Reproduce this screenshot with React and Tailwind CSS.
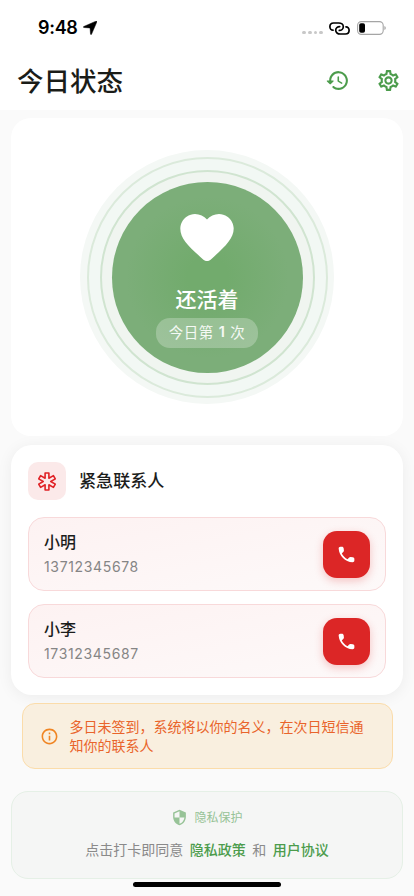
import { MdOutlineSettings, MdInfoOutline, MdSecurity } from "react-icons/md";

const contacts = [
  { name: "小明", phone: "13712345678" },
  { name: "小李", phone: "17312345687" },
];

function HistoryIcon() {
  return (
    <svg width="25" height="25" viewBox="0 0 24 24" fill="currentColor">
      <path d="M13.26 3C8.17 2.86 4 6.95 4 12H2.21c-.45 0-.67.54-.35.85l2.79 2.8c.2.2.51.2.71 0l2.79-2.8c.31-.31.09-.85-.36-.85H6c0-3.9 3.18-7.05 7.1-7 3.72.05 6.85 3.18 6.9 6.9.05 3.91-3.1 7.1-7 7.1-1.61 0-3.1-.55-4.28-1.48-.4-.31-.96-.28-1.32.08-.42.42-.39 1.13.08 1.49C9 20.29 10.91 21 13 21c5.05 0 9.14-4.17 9-9.26-.13-4.69-4.05-8.61-8.74-8.74zm-.51 5c-.41 0-.75.34-.75.75v3.68c0 .35.19.68.49.86l3.12 1.85c.36.21.82.09 1.03-.26.21-.36.09-.82-.26-1.03l-2.88-1.71v-3.4c0-.4-.34-.74-.75-.74z" />
    </svg>
  );
}

function HeartIcon() {
  return (
    <svg className="shrink-0" width="64" height="64" viewBox="0 0 24 24" fill="currentColor">
      <path d="M13.35 20.13c-.76.69-1.93.69-2.69-.01l-.11-.1C5.3 15.27 1.87 12.16 2 8.28c.06-1.7.93-3.33 2.34-4.29 2.64-1.8 5.9-.96 7.66 1.1 1.76-2.06 5.02-2.91 7.66-1.1 1.41.96 2.28 2.59 2.34 4.29.14 3.88-3.3 6.99-8.55 11.76l-.1.09z" />
    </svg>
  );
}

function CallIcon() {
  return (
    <svg width="21" height="21" viewBox="0 0 24 24" fill="currentColor">
      <path d="M19.23 15.26l-2.54-.29c-.61-.07-1.21.14-1.64.57l-1.84 1.84c-2.83-1.44-5.15-3.75-6.59-6.59l1.85-1.85c.43-.43.64-1.03.57-1.64l-.29-2.52c-.12-1.01-.97-1.77-1.99-1.77H5.03c-1.13 0-2.07.94-2 2.07.53 8.54 7.36 15.36 15.89 15.89 1.13.07 2.07-.87 2.07-2v-1.73c.01-1.01-.75-1.86-1.76-1.98z" />
    </svg>
  );
}

function StatusBar() {
  return (
    <div className="flex h-[54px] items-center pl-[38px] pr-[28px] pt-[2px]">
      <span className="font-['Inter'] text-[18px] font-semibold leading-none tracking-[-0.3px] text-black">9:48</span>
      <svg className="ml-[5px]" width="14" height="14" viewBox="0 0 14 14">
        <path d="M12.9.2Q14.200-.2 13.8 1L8.600 13.1Q8 14.300 7.500 13L7.100 7.400Q7.100 6.900 6.600 6.900L.9 6.500Q-.4 6.200.8 5.500Z" stroke="#000" strokeWidth=".5" />
      </svg>
      <div className="ml-auto mt-[9px] flex gap-[1.8px]">
        {[0, 1, 2, 3].map((i) => (
          <i key={i} className="size-[3.8px] rounded-full bg-[#c8c8c8]" />
        ))}
      </div>
      <svg className="ml-[6px]" width="21" height="13" viewBox="0 0 21 13" fill="none" stroke="#000" strokeWidth="1.7" strokeLinecap="round">
        <path d="M4 8.2C2.200 8.200.9 6.500.9 4.700C.9 2.600 2.500 1 4.600 1H9.800C12.300 1 14.300 2.500 14.300 4.700C14.300 6.800 12.500 8.400 10.300 8.400" />
        <path d="M17 4.800C18.800 4.800 20.100 6.500 20.100 8.300C20.100 10.400 18.500 12 16.400 12H11.200C8.700 12 6.700 10.500 6.700 8.300C6.700 6.200 8.500 4.600 10.700 4.600" />
      </svg>
      <svg className="ml-[7px]" width="29" height="14" viewBox="0 0 29 14" fill="none">
        <rect x=".6" y=".6" width="25.6" height="12.8" rx="3.8" stroke="#a5a5a5" strokeWidth="1.1" />
        <rect x="2.2" y="2.2" width="5.8" height="9.6" rx="1.8" fill="#000" />
        <path d="M27.4 5v4Q28.8 8.5 28.8 7T27.4 5" fill="#a5a5a5" />
      </svg>
    </div>
  );
}

function Header() {
  return (
    <header className="flex h-[52px] items-center pl-[17px] pr-[13px]">
      <h1 className="text-[26.5px] font-medium leading-none text-[#1a1c18]">今日状态</h1>
      <div className="ml-auto flex gap-[26px] text-[#4c9c4c]">
        <HistoryIcon />
        <MdOutlineSettings size={25} />
      </div>
    </header>
  );
}

function CheckIn() {
  return (
    <section className="mx-[11px] mt-2 flex h-[318px] items-center justify-center rounded-[20px] bg-white">
      <div className="flex size-[254px] items-center justify-center rounded-full bg-[#f4f8f5]">
        <div className="flex size-[241px] items-center justify-center rounded-full border-2 border-[#dbeadb] bg-[#f2f8f4]">
          <div className="flex size-[215px] items-center justify-center rounded-full border-2 border-[#d0e4d0] bg-[#f0f5f0]">
            <button className="flex size-[191px] flex-col items-center rounded-full bg-[radial-gradient(circle,#72ab6d_15%,#7cae79_60%)] pt-[24px] text-white">
              <HeartIcon />
              <span className="mt-[16px] text-[21px] font-medium leading-6">还活着</span>
              <span className="mt-[8px] flex h-[30px] w-[102px] shrink-0 items-center justify-center rounded-[14px] bg-white/25 pb-[1px] text-[14.5px] tracking-[0.5px] text-white/90">
                今日第<b className="mx-[5px] font-['Inter'] font-semibold">1</b>次
              </span>
            </button>
          </div>
        </div>
      </div>
    </section>
  );
}

function Contact({ name, phone }) {
  return (
    <div className="flex h-[74px] items-center rounded-[16px] border border-[#f8d9da] bg-linear-to-br from-[#fdf2f2] to-[#fdf9f9] pl-[15px] pr-[15px]">
      <div>
        <div className="text-[16px] font-medium leading-6 text-[#1b1d1b]">{name}</div>
        <div className="mt-[2px] font-['Inter'] text-[14px] leading-6 tracking-[0.65px] text-[#858585]">{phone}</div>
      </div>
      <button className="ml-auto flex size-[47px] items-center justify-center rounded-[14px] bg-[#dc2626] text-white shadow-[0_3px_8px_rgba(220,38,38,0.25)]">
        <CallIcon />
      </button>
    </div>
  );
}

function Contacts() {
  return (
    <section className="mx-[11px] mt-[9px] h-[250px] rounded-[21px] bg-white px-[17px] pt-[17px] shadow-[0_2px_16px_rgba(0,0,0,0.06)]">
      <div className="flex items-center">
        <div className="flex size-[38px] items-center justify-center rounded-[10px] bg-[#fbe9e9]">
          <svg width="18" height="19" viewBox="0 0 18 19" fill="none" stroke="#e02226" strokeWidth="1.6" strokeLinejoin="round">
            <path d="M7.1 1h3.8v5.2l4.5-2.6 1.9 3.3-4.5 2.6 4.5 2.6-1.9 3.3-4.5-2.6V18H7.1v-5.2l-4.5 2.6-1.9-3.3 4.5-2.6L.7 6.9l1.9-3.3 4.5 2.6Z" />
          </svg>
        </div>
        <h2 className="ml-[13px] pb-[2px] text-[17.1px] font-medium leading-none text-[#1b1d1b]">紧急联系人</h2>
      </div>
      <div className="mt-[17px] flex flex-col gap-[13px]">
        {contacts.map((c) => (
          <Contact key={c.phone} {...c} />
        ))}
      </div>
    </section>
  );
}

function Notice() {
  return (
    <section className="ml-[21.5px] mr-[21.5px] mt-2 flex h-[66px] items-center rounded-[13px] border border-[#fbdcaa] bg-[#f9efdf] pl-[17.500px]">
      <MdInfoOutline size={19} className="shrink-0 text-[#f08523]" />
      <p className="ml-[10.5px] text-[14px] leading-[19px] text-[#e9642b]">
        多日未签到，系统将以你的名义，在次日短信通
        <br />
        知你的联系人
      </p>
    </section>
  );
}

function Privacy() {
  return (
    <footer className="mx-[11px] mt-[21.500px] flex h-[88px] flex-col items-center rounded-[17px] border border-[#e5f0e6] bg-[#f5f6f5] pt-[15.500px]">
      <div className="flex items-center gap-[6px] text-[12px] leading-5 text-[#97c397]">
        <MdSecurity size={17} />
        <span>隐私保护</span>
      </div>
      <p className="mt-[12px] flex gap-[6.5px] text-[14px] leading-5 text-[#8a8a8a]">
        <span>点击打卡即同意</span>
        <a className="font-medium text-[#4c9c4c]">隐私政策</a>
        <span>和</span>
        <a className="font-medium text-[#4c9c4c]">用户协议</a>
      </p>
    </footer>
  );
}

export default function App() {
  return (
    <main className="relative h-[896px] w-[414px] overflow-hidden bg-[#fafafa] font-['Noto_Sans_CJK_SC',sans-serif]">
      <div className="h-[110px] bg-white">
        <StatusBar />
        <Header />
      </div>
      <CheckIn />
      <Contacts />
      <Notice />
      <Privacy />
      <div className="absolute bottom-[9px] left-[133px] h-[5px] w-[148px] rounded-full bg-black" />
    </main>
  );
}
